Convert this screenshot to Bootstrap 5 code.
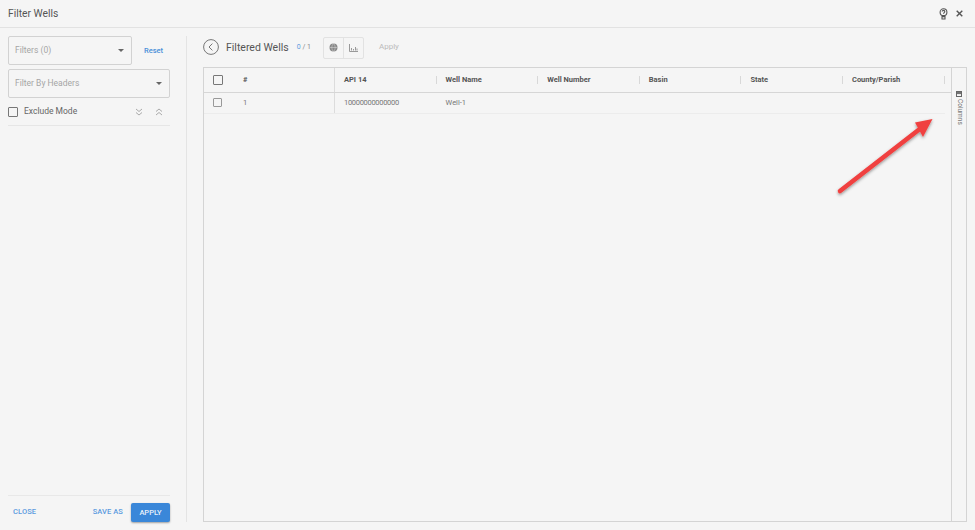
<!DOCTYPE html>
<html lang="en">
<head>
    <meta charset="UTF-8">
    <title>Filter Wells</title>
    <link href="https://cdn.jsdelivr.net/npm/bootstrap@5.3.0/dist/css/bootstrap.min.css" rel="stylesheet">
    <style>
        html, body { height: 100%; }
        body {
            font-family: Roboto, "Liberation Sans", sans-serif;
            background: #f5f5f5;
            color: #555;
            font-size: 8px;
            overflow: hidden;
        }
        .page-wrap { width: 975px; height: 530px; position: relative; }
        .dlg-head { height: 28px; border-bottom: 1px solid #e2e2e2; padding: 0 12px 0 8px; }
        .dlg-title { font-size: 10.3px; color: #555; }
        .dlg-body { height: 502px; }
        .side-pane { width: 187px; margin-top: 8px; margin-bottom: 8px; padding: 0 16px 0 8px; border-right: 1px solid #e4e4e4; }
        .select-box {
            height: 29px; border: 1px solid #d2d2d2; border-radius: 2px;
            padding: 0 7px 0 6px; color: #a5a5a5; font-size: 8.5px;
        }
        .caret { width: 0; height: 0; border-left: 3px solid transparent; border-right: 3px solid transparent; border-top: 3px solid #666; }
        .reset-link { font-size: 7.5px; font-weight: 500; color: #4a90d9; width: 38px; flex: none; text-align: center; padding-left: 5px; }
        .check-big { width: 10px; height: 10px; border: 1px solid #777; border-radius: 1px; }
        .check-row { width: 9px; height: 9px; border: 1px solid #999; border-radius: 1px; }
        .exclude-row { height: 28px; border-bottom: 1px solid #e6e6e6; color: #666; font-size: 8.5px; padding-right: 7px; }
        .exclude-label { margin-left: 6px; }
        .foot-row { border-top: 1px solid #e8e8e8; height: 27px; }
        .link-txt { font-size: 7.5px; font-weight: 500; color: #5b9bdf; letter-spacing: .1px; padding-bottom: 5px; }
        .close-link { margin-left: 5px; }
        .apply-btn {
            width: 39px; height: 19px; padding: 0; border: 0; border-radius: 2px;
            background: #3a87d9; color: #e8f1fb; font-size: 7.5px; font-weight: 500;
            box-shadow: 0 1px 2px rgba(0,0,0,.35);
        }
        .main-pane { padding: 0 8px 8px 16px; min-width: 0; }
        .tool-row { height: 39px; }
        .back-circle { width: 16px; height: 16px; margin-right: 7px; }
        .tool-title { font-size: 10.5px; color: #555; margin-right: 8px; }
        .count-txt { font-size: 7px; color: #888; margin-right: 12px; }
        .count-txt span { color: #5b9bdf; }
        .tool-group { border: 1px solid #e2e2e2; border-radius: 2px; height: 22px; margin-right: 15px; margin-top: 1px; }
        .tool-cell { width: 19.5px; height: 20px; }
        .tool-cell + .tool-cell { border-left: 1px solid #e2e2e2; }
        .apply-muted { font-size: 8px; color: #bbb; }
        .grid-shell { border: 1px solid #d4d4d4; height: 456px; }
        .grid-main { min-width: 0; }
        .grid-head { height: 25px; border-bottom: 1px solid #d6d6d6; font-weight: 700; color: #555; font-size: 7.5px; }
        .grid-row { height: 21px; border-bottom: 1px solid #ececec; color: #777; font-size: 7.5px; margin-right: 6px; }
        .cell-sel { width: 131px; flex: none; border-right: 1px solid #dcdcdc; height: 100%; padding-left: 9px; }
        .cell-num { margin-left: 20px; }
        .grid-row .cell-num { margin-left: 21px; }
        .cell-data { width: 101.6px; flex: none; padding-left: 9px; height: 100%; position: relative; }
        .grid-head .cell-data::after {
            content: ""; position: absolute; right: 0; top: 8px; height: 8px; border-right: 1px solid #d8d8d8;
        }
        .api-val { letter-spacing: -.3px; }
        .side-tab { width: 15px; flex: none; border-left: 1px solid #d4d4d4; padding-top: 23px; color: #777; font-size: 6.5px; }
        .side-tab span { writing-mode: vertical-rl; margin-top: 2px; }
        .arrow-over { position: absolute; left: 825px; top: 105px; width: 120px; height: 100px; pointer-events: none; }
    </style>
</head>
<body>
    <div class="page-wrap">
        <!-- Header -->
        <div class="dlg-head d-flex align-items-center justify-content-between">
            <div class="dlg-title">Filter Wells</div>
            <div class="d-flex align-items-center gap-2">
                <svg width="9" height="12" viewBox="0 0 9 12" fill="none" stroke="#555" stroke-width="1.1"><circle cx="4.5" cy="4.2" r="3.4"/><path d="M3.2 3.6c0-1.6 2.6-1.6 2.6 0 0 1-1.3 1-1.3 2.2"/><path d="M3 8.6h3v2.4H3z"/></svg>
                <svg width="7" height="7" viewBox="0 0 7 7" stroke="#555" stroke-width="1.4"><path d="M.7.7l5.6 5.6M6.3.7L.7 6.3"/></svg>
            </div>
        </div>

        <div class="dlg-body d-flex">
            <!-- Filters side -->
            <div class="side-pane d-flex flex-column flex-shrink-0">
                <div class="d-flex align-items-center mb-1">
                    <div class="select-box flex-grow-1 d-flex align-items-center justify-content-between">Filters (0)<i class="caret"></i></div>
                    <div class="reset-link">Reset</div>
                </div>
                <div class="select-box d-flex align-items-center justify-content-between">Filter By Headers<i class="caret"></i></div>
                <div class="exclude-row d-flex align-items-center">
                    <i class="check-big flex-shrink-0"></i>
                    <span class="exclude-label flex-grow-1">Exclude Mode</span>
                    <svg class="me-2" width="8" height="8" viewBox="0 0 8 8" fill="none" stroke="#aaa"><path d="M1 1l3 2.5L7 1M1 4.5L4 7l3-2.5"/></svg>
                    <svg class="ms-1" width="8" height="8" viewBox="0 0 8 8" fill="none" stroke="#aaa"><path d="M1 3.5L4 1l3 2.5M1 7l3-2.5L7 7"/></svg>
                </div>
                <div class="foot-row mt-auto d-flex align-items-end">
                    <span class="link-txt close-link flex-grow-1">CLOSE</span>
                    <span class="link-txt me-2">SAVE AS</span>
                    <button class="apply-btn" type="button">APPLY</button>
                </div>
            </div>

            <!-- Grid side -->
            <div class="main-pane flex-grow-1 d-flex flex-column">
                <div class="tool-row d-flex align-items-center">
                    <svg class="back-circle" viewBox="0 0 16 16" fill="none" stroke="#777"><circle cx="8" cy="8" r="7.4"/><path d="M9.4 4.6L6 8l3.4 3.4"/></svg>
                    <span class="tool-title">Filtered Wells</span>
                    <span class="count-txt"><span>0</span> / 1</span>
                    <div class="tool-group d-flex">
                        <div class="tool-cell d-flex align-items-center justify-content-center">
                            <svg width="9" height="9" viewBox="0 0 9 9"><circle cx="4.5" cy="4.5" r="4" fill="#888"/><path d="M.5 4.5h8M4.5.5c-2.2 2.4-2.2 5.6 0 8M4.5.5c2.2 2.4 2.2 5.6 0 8" fill="none" stroke="#ddd" stroke-width=".5"/></svg>
                        </div>
                        <div class="tool-cell d-flex align-items-center justify-content-center">
                            <svg width="9" height="8" viewBox="0 0 9 8" fill="none" stroke="#999"><path d="M.5 0v7.5H9M2.5 6.5V4M4.5 6.5V5M6.5 6.5V3M8 6.5V4.5"/></svg>
                        </div>
                    </div>
                    <span class="apply-muted">Apply</span>
                </div>

                <div class="grid-shell d-flex">
                    <div class="grid-main flex-grow-1">
                        <div class="grid-head d-flex align-items-center">
                            <div class="cell-sel d-flex align-items-center"><i class="check-big"></i><span class="cell-num">#</span></div>
                            <div class="cell-data d-flex align-items-center">API 14</div>
                            <div class="cell-data d-flex align-items-center">Well Name</div>
                            <div class="cell-data d-flex align-items-center">Well Number</div>
                            <div class="cell-data d-flex align-items-center">Basin</div>
                            <div class="cell-data d-flex align-items-center">State</div>
                            <div class="cell-data d-flex align-items-center">County/Parish</div>
                        </div>
                        <div class="grid-row d-flex align-items-center">
                            <div class="cell-sel d-flex align-items-center"><i class="check-row"></i><span class="cell-num">1</span></div>
                            <div class="cell-data d-flex align-items-center api-val">10000000000000</div>
                            <div class="cell-data d-flex align-items-center">Well-1</div>
                        </div>
                    </div>
                    <div class="side-tab d-flex flex-column align-items-center">
                        <svg width="6" height="6" viewBox="0 0 6 6" fill="none" stroke="#666"><rect x=".5" y=".5" width="5" height="5"/><path d="M.5 1.6h5M.5 2.6h5"/></svg>
                        <span>Columns</span>
                    </div>
                </div>
            </div>
        </div>

        <!-- Red annotation arrow -->
        <svg class="arrow-over" viewBox="0 0 120 100">
            <defs><filter id="arrowShadow" x="-20%" y="-20%" width="140%" height="140%"><feDropShadow dx="0" dy="1.5" stdDeviation="1.5" flood-color="#000" flood-opacity=".4"/></filter></defs>
            <g filter="url(#arrowShadow)">
                <path d="M15 86L96 23" stroke="#f0413f" stroke-width="4.6" stroke-linecap="round"/>
                <path d="M107.5 14L90 17.5L98 32Z" fill="#f0413f"/>
            </g>
        </svg>
    </div>
    <script src="https://cdn.jsdelivr.net/npm/bootstrap@5.3.0/dist/js/bootstrap.bundle.min.js"></script>
</body>
</html>
